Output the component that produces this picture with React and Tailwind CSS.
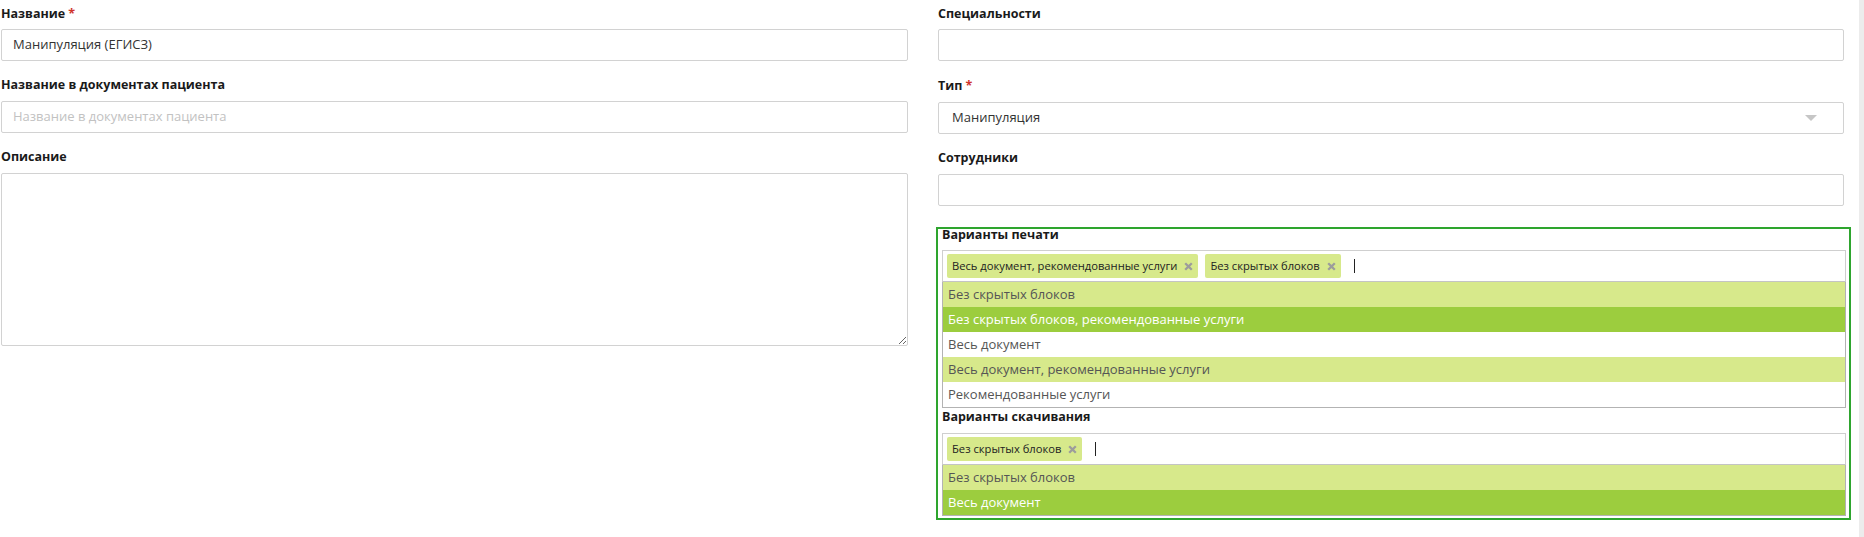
import React from "react";

function Label({ children, req, className = "" }) {
  return (
    <div className={"text-[12.5px] font-bold text-[#1a1a1a] " + className}>
      {children}
      {req && <span className="text-[#d0342c] ml-[3px]">*</span>}
    </div>
  );
}

function Chip({ children }) {
  return (
    <div className="h-[24px] flex items-center bg-[#d7e98b] rounded-[2px] pl-[5px] pr-[5px] text-[11.2px] text-[#222]">
      <span>{children}</span>
      <span className="ml-[7px] flex items-center">
        <svg width="9" height="9" viewBox="0 0 9 9">
          <path d="M1.2 1.2L7.8 7.8M7.8 1.2L1.2 7.8" stroke="#9c9c9c" strokeWidth="2.3" strokeLinecap="butt" />
        </svg>
      </span>
    </div>
  );
}

function Item({ children, tone }) {
  const cls =
    tone === "dark"
      ? "bg-[#9ccd3e] text-white"
      : tone === "light"
      ? "bg-[#d7e98b] text-[#555]"
      : "bg-white text-[#555]";
  return (
    <div className={"h-[25px] flex items-center px-[5px] text-[13px] " + cls}>{children}</div>
  );
}

export default function App() {
  return (
    <div className="w-[1864px] h-[537px] bg-white flex overflow-hidden font-['Open_Sans',sans-serif]">
      {/* Left column */}
      <div className="w-[907px] ml-px flex flex-col">
        <div className="pb-[11px]">
          <Label req className="h-[29px] pt-[6px] leading-[16px]">Название</Label>
          <div className="h-[32px] border border-[#d2d2d2] rounded-[2px] flex items-center pl-[11px] text-[13px] text-[#333]">
            Манипуляция (ЕГИСЗ)
          </div>
        </div>
        <div className="pb-[11px]">
          <Label className="h-[29px] pt-[5px] leading-[16px]">Название в документах пациента</Label>
          <div className="h-[32px] border border-[#d2d2d2] rounded-[2px] flex items-center pl-[11px] text-[13px] text-[#c2c2c2]">
            Название в документах пациента
          </div>
        </div>
        <div>
          <Label className="h-[29px] pt-[5px] leading-[16px]">Описание</Label>
          <textarea
            className="block w-full h-[173px] border border-[#d2d2d2] rounded-[2px] outline-none resize-y"
            defaultValue=""
          />
        </div>
      </div>

      {/* Right column */}
      <div className="w-[906px] ml-[30px] flex flex-col">
        <div className="pb-[11px]">
          <Label className="h-[29px] pt-[6px] leading-[16px]">Специальности</Label>
          <div className="h-[32px] border border-[#d2d2d2] rounded-[2px]" />
        </div>
        <div className="pb-[11px]">
          <Label req className="h-[30px] pt-[6px] leading-[16px]">Тип</Label>
          <div className="h-[32px] border border-[#d2d2d2] rounded-[2px] flex items-center justify-between pl-[13px] pr-[26px] text-[13px] text-[#333]">
            <span>Манипуляция</span>
            <svg width="12" height="6" viewBox="0 0 12 6">
              <path d="M0 0H12L6 6Z" fill="#c6c6c6" />
            </svg>
          </div>
        </div>
        <div>
          <Label className="h-[29px] pt-[5px] leading-[16px]">Сотрудники</Label>
          <div className="h-[32px] border border-[#d2d2d2] rounded-[2px]" />
        </div>

        {/* Highlighted block */}
        <div className="mt-[21px] -ml-[2px] -mr-[7px] border-2 border-[#2ea52e] pl-[4px] pr-[3px] pb-[2px]">
          <div className="h-[21px] text-[12.5px] font-bold text-[#1a1a1a] leading-[12px]">Варианты печати</div>
          <div className="h-[32px] border border-[#cfcfcf] border-b-[#c4c4c4] flex items-center gap-[7px] px-[4px]">
            <Chip>Весь документ, рекомендованные услуги</Chip>
            <Chip>Без скрытых блоков</Chip>
            <div className="ml-[6px] w-px h-[14px] bg-[#222]" />
          </div>
          <div className="border-x border-b border-[#b3b3b3]">
            <Item tone="light">Без скрытых блоков</Item>
            <Item tone="dark">Без скрытых блоков, рекомендованные услуги</Item>
            <Item>Весь документ</Item>
            <Item tone="light">Весь документ, рекомендованные услуги</Item>
            <Item>Рекомендованные услуги</Item>
          </div>
          <div className="h-[25px] pt-[1px] text-[12.5px] font-bold text-[#1a1a1a] leading-[16px]">Варианты скачивания</div>
          <div className="h-[32px] border border-[#cfcfcf] border-b-[#c4c4c4] flex items-center gap-[7px] px-[4px]">
            <Chip>Без скрытых блоков</Chip>
            <div className="ml-[6px] w-px h-[14px] bg-[#222]" />
          </div>
          <div className="border-x border-b border-[#b3b3b3]">
            <Item tone="light">Без скрытых блоков</Item>
            <Item tone="dark">Весь документ</Item>
          </div>
        </div>
      </div>

      <div className="ml-auto w-[5px] bg-[#ececec]" />
    </div>
  );
}
